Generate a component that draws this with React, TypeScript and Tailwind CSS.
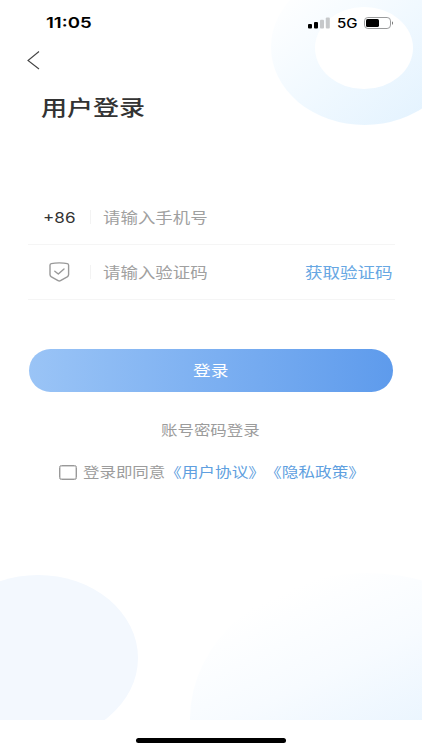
import type { ReactNode } from 'react';

interface WideTextProps {
    className: string;
    children: ReactNode;
}

// Expanded lettering used across the whole screen
function WideText({ className, children }: WideTextProps) {
    return (
        <span className={`block whitespace-nowrap origin-left ${className}`}>
            {children}
        </span>
    );
}

function Background() {
    return (
        <div className="absolute inset-x-0 top-0 h-[719.5px] overflow-hidden">
            <div className="absolute left-[271px] top-[-31px] w-[187px] h-[156px] rounded-[50%] bg-linear-to-br from-white from-10% via-[#f1f9ff] via-50% to-[#e0f1fe]"></div>
            <div className="absolute left-[315px] top-[7px] w-[98px] h-[82px] rounded-[50%] bg-white"></div>
            <div className="absolute left-[-62px] top-[575px] w-[200px] h-[166px] rounded-[50%] bg-[#f3f8fe]"></div>
            <div className="absolute left-[190px] top-[573px] w-[352px] h-[292px] rounded-[50%] bg-linear-[155deg] from-white from-14% via-[#f7fbff] via-36% to-[#e6f3fe] to-65%"></div>
        </div>
    );
}

function StatusBar() {
    return (
        <header className="flex h-[46px] items-center pl-[46px] text-black font-['Inter','Liberation_Sans',sans-serif]">
            <div className="w-[262px] pt-px">
                <WideText className="text-[15px] font-semibold scale-x-[1.24]">11:05</WideText>
            </div>
            <svg className="w-[22px] h-3" viewBox="0 0 22 12">
                <rect x="0" y="7" width="4" height="4.5" rx="1" fill="#000" />
                <rect x="6" y="5" width="4" height="6.5" rx="1" fill="#000" />
                <rect x="12" y="2.8" width="4" height="8.7" rx="1" fill="#c6c8ca" />
                <rect x="17.8" y="0.5" width="4" height="11" rx="1" fill="#c6c8ca" />
            </svg>
            <div className="ml-[6.5px] w-[27.5px] pt-[2px]">
                <WideText className="text-[12.5px] font-medium scale-x-[1.2]">5G</WideText>
            </div>
            <svg className="w-[30px] h-3" viewBox="0 0 30 12">
                <rect x="0.5" y="0.5" width="26" height="11" rx="3.4" fill="none" stroke="#9a9b9c" />
                <rect x="2" y="2" width="13" height="8" rx="1.6" fill="#000" />
                <path d="M28 4.2c1.4.5 1.4 3.1 0 3.6z" fill="#777" />
            </svg>
        </header>
    );
}

export default function App() {
    return (
        <div className="relative h-[750px] w-[422px] overflow-hidden bg-white font-['Noto_Sans_CJK_SC',sans-serif]">
            <Background />

            <div className="relative flex h-full flex-col">
                <StatusBar />

                <button className="mt-[5px] ml-[27px] h-[19px] w-[13px]">
                    <svg className="h-[19px] w-[13px]" viewBox="0 0 13 19" fill="none" stroke="#444" strokeWidth="1.1">
                        <path d="M12 0.5L1 9.5L12 18" />
                    </svg>
                </button>

                <h1 className="mt-[20px] ml-[41px] h-8 text-[#333]">
                    <WideText className="text-[21px] leading-8 font-medium scale-x-[1.24]">用户登录</WideText>
                </h1>

                <form className="mt-[68px] ml-[28px] w-[367px]">
                    <div className="flex h-[55px] items-center border-b border-[#f5f5f5]">
                        <div className="w-[62px] pt-px pl-[15px] text-[#333] font-['Inter',sans-serif]">
                            <WideText className="text-[14.5px] scale-x-[1.18]">+86</WideText>
                        </div>
                        <div className="h-3.5 w-px bg-[#f3f3f3]"></div>
                        <div className="ml-[12px] text-[#a0a0a0]">
                            <WideText className="text-[15px] scale-x-[1.163]">请输入手机号</WideText>
                        </div>
                    </div>

                    <div className="flex h-[55px] items-center border-b border-[#f5f5f5]">
                        <div className="w-[62px] pl-[21px]">
                            <svg className="h-5 w-[21px]" viewBox="0 0 21 20" fill="none" stroke="#999" strokeWidth="1.4" strokeLinejoin="round" strokeLinecap="round">
                                <path d="M10.3 0.9C13 0.9 16.5 1.2 18.3 1.6C19.2 1.8 19.6 2.4 19.6 3.3V12.4C19.6 13.6 19.2 14.2 18.2 14.9L11.5 18.7C10.7 19.2 9.9 19.2 9.1 18.7L2.4 14.9C1.4 14.2 1 13.6 1 12.4V3.3C1 2.4 1.4 1.8 2.3 1.6C4.1 1.2 7.6 0.9 10.3 0.9Z" />
                                <path d="M5.8 9.2L9.3 12L15 7" />
                            </svg>
                        </div>
                        <div className="h-3.5 w-px bg-[#f3f3f3]"></div>
                        <div className="ml-[12px] w-[202px] text-[#a0a0a0]">
                            <WideText className="text-[15px] scale-x-[1.163]">请输入验证码</WideText>
                        </div>
                        <div className="text-[#67a7e3]">
                            <WideText className="text-[15px] scale-x-[1.168]">获取验证码</WideText>
                        </div>
                    </div>

                    <button
                        type="button"
                        className="mt-[49px] ml-px flex h-[42.5px] w-[364px] items-center rounded-full bg-linear-to-r from-[#9ac4f6] to-[#5e9bec] pl-[164px] text-white"
                    >
                        <WideText className="text-[15px] scale-x-[1.18]">登录</WideText>
                    </button>
                </form>

                <div className="mt-[25.5px] ml-[161px] h-6 text-[#9c9c9c]">
                    <WideText className="text-[14px] leading-6 scale-x-[1.175]">账号密码登录</WideText>
                </div>

                <div className="mt-[18px] ml-[59px] flex h-6 items-center">
                    <span className="mt-[3px] h-[15px] w-[18px] rounded-[2.5px] border-[1.5px] border-[#999] shadow-[inset_0_0_0_0.5px_#aaa]"></span>
                    <div className="ml-[6px] w-[82px] text-[#9c9c9c]">
                        <WideText className="text-[14px] leading-6 scale-x-[1.175]">登录即同意</WideText>
                    </div>
                    <div className="w-[99.5px] text-[#5f9fe0]">
                        <WideText className="text-[14px] leading-6 scale-x-[1.19]">《用户协议》</WideText>
                    </div>
                    <div className="text-[#5f9fe0]">
                        <WideText className="text-[14px] leading-6 scale-x-[1.19]">《隐私政策》</WideText>
                    </div>
                </div>

                <div className="mt-auto mb-[7px] ml-[136px] h-[5px] w-[150px] rounded-full bg-black"></div>
            </div>
        </div>
    );
}
